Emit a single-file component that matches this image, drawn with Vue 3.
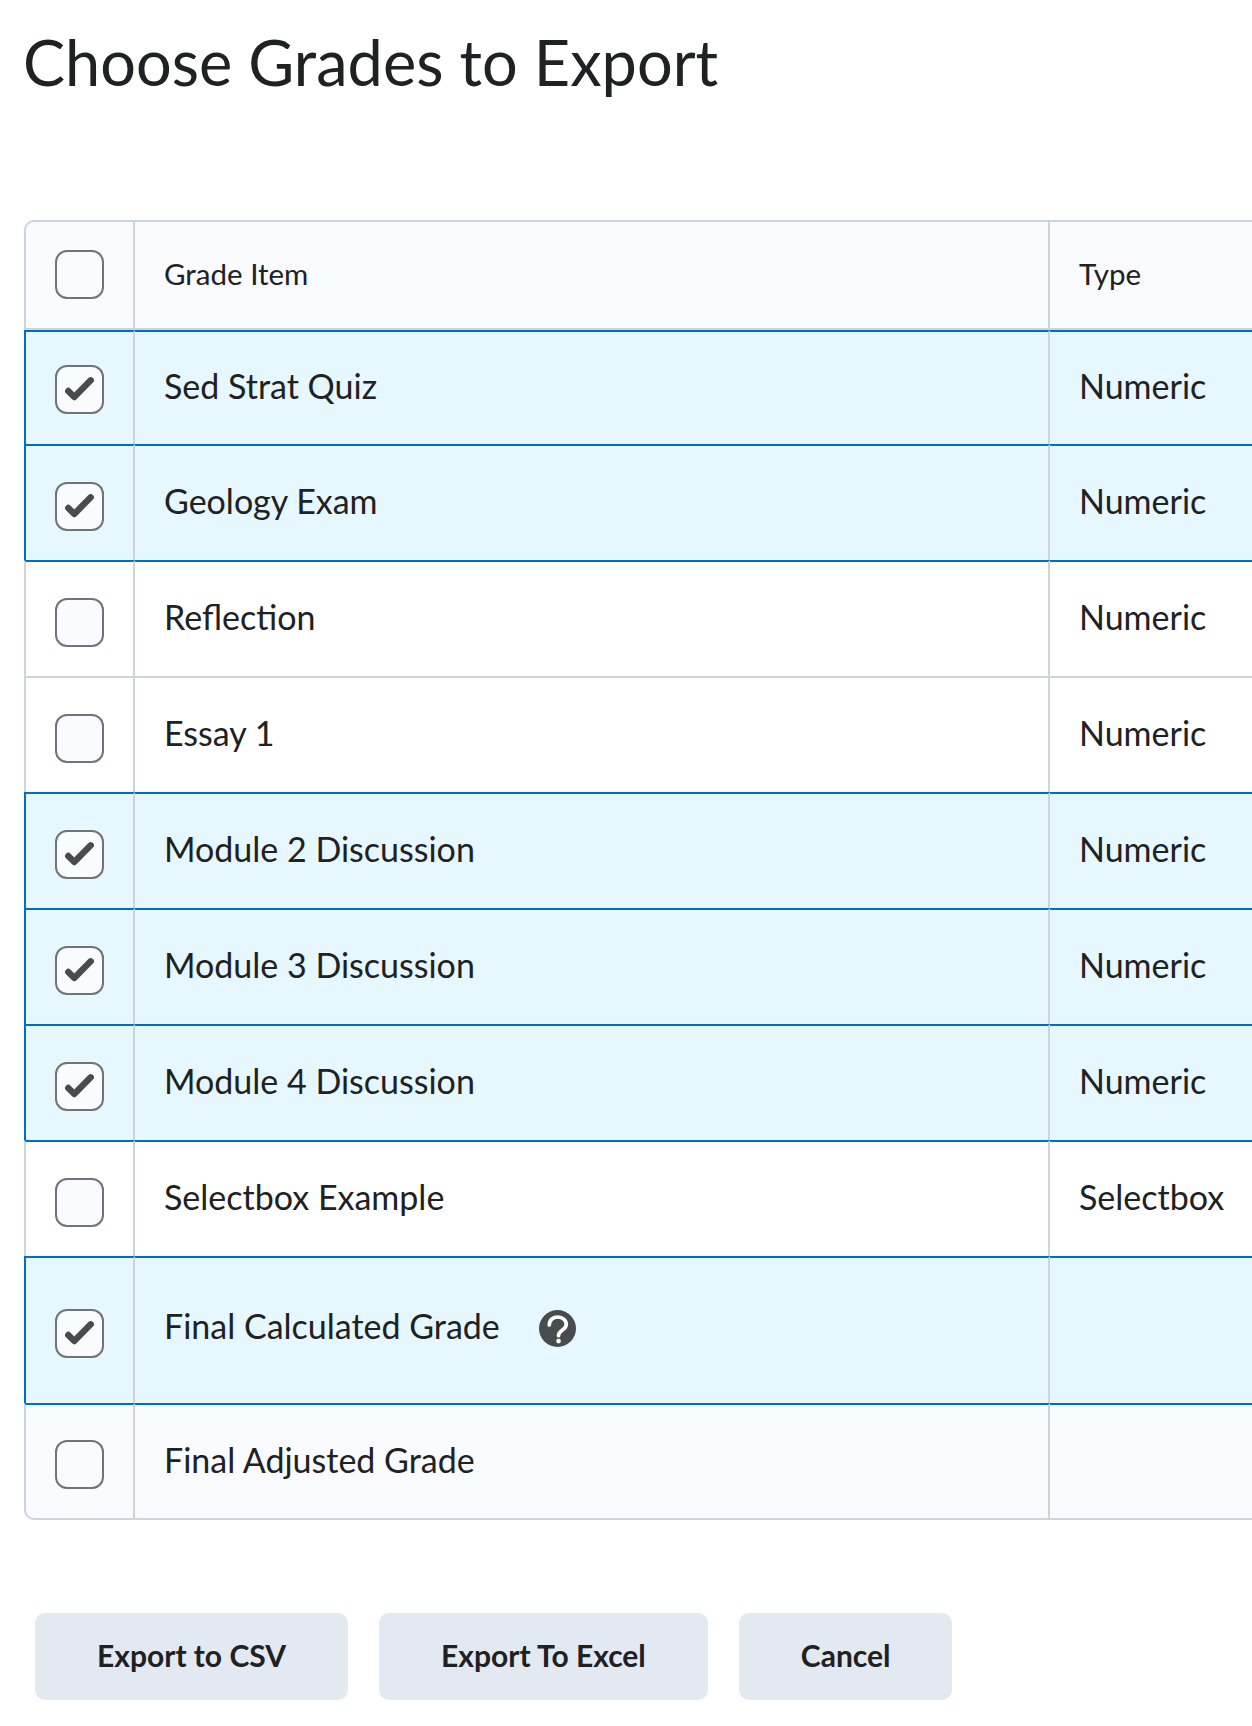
<template>
  <div class="page">
    <h1 class="title">Choose Grades to Export</h1>

    <table class="grades">
      <colgroup>
        <col class="col-check" />
        <col class="col-name" />
        <col class="col-type" />
      </colgroup>
      <thead>
        <tr>
          <th class="cell-check"><span class="checkbox"></span></th>
          <th>Grade Item</th>
          <th>Type</th>
        </tr>
      </thead>
      <tbody>
        <tr v-for="row in rows" :key="row.name" :class="rowClass(row)">
          <td class="cell-check">
            <span class="checkbox">
              <svg v-if="row.selected" viewBox="0 0 45 45" width="45" height="45">
                <path d="M11.3 24l6 6L33.7 13.3" fill="none" stroke="#494c4e" stroke-width="6.4" stroke-linecap="round" stroke-linejoin="round" />
              </svg>
            </span>
          </td>
          <td>
            <div class="name">
              <span>{{ row.name }}</span>
              <svg v-if="row.help" class="help" viewBox="0 0 36 36" width="37" height="37">
                <circle cx="18" cy="18" r="18" fill="#494c4e" />
                <path d="M10 14.5C10 9.5 14 6.8 18.3 6.8 22.8 6.8 26.5 9.8 26.5 14 26.5 19.5 19 19.5 19 25" fill="none" stroke="#fff" stroke-width="3.6" stroke-linecap="round" />
                <circle cx="19" cy="30.2" r="2.3" fill="#fff" />
              </svg>
            </div>
          </td>
          <td>{{ row.type }}</td>
        </tr>
      </tbody>
    </table>

    <div class="actions">
      <button class="btn">Export to CSV</button>
      <button class="btn">Export To Excel</button>
      <button class="btn">Cancel</button>
    </div>
  </div>
</template>

<script setup>
const rows = [
  { name: 'Sed Strat Quiz', type: 'Numeric', selected: true, first: true },
  { name: 'Geology Exam', type: 'Numeric', selected: true },
  { name: 'Reflection', type: 'Numeric', selected: false, white: true },
  { name: 'Essay 1', type: 'Numeric', selected: false, white: true },
  { name: 'Module 2 Discussion', type: 'Numeric', selected: true },
  { name: 'Module 3 Discussion', type: 'Numeric', selected: true },
  { name: 'Module 4 Discussion', type: 'Numeric', selected: true },
  { name: 'Selectbox Example', type: 'Selectbox', selected: false, white: true },
  { name: 'Final Calculated Grade', type: '', selected: true, help: true },
  { name: 'Final Adjusted Grade', type: '', selected: false, last: true }
]

function rowClass(row) {
  const i = rows.indexOf(row)
  return {
    selected: row.selected,
    white: row.white,
    'after-selected': i > 0 && rows[i - 1].selected,
    'row-first': row.first,
    'row-help': row.help,
    'row-last': row.last
  }
}
</script>

<style scoped>
.page {
  width: 1252px;
  height: 1726px;
  overflow: hidden;
  font-family: Lato, "Open Sans", sans-serif;
  color: #202122;
  background: #fff;
}

.title {
  margin: 0;
  padding: 24px 0 0 23px;
  height: 220px;
  box-sizing: border-box;
  font-size: 63px;
  line-height: 76px;
  font-weight: 400;
}

.grades {
  margin-left: 24px;
  width: 1500px;
  table-layout: fixed;
  border-collapse: separate;
  border-spacing: 0;
}

.col-check {
  width: 111px;
}

.col-name {
  width: 915px;
}

th,
td {
  box-sizing: border-box;
  padding: 0 0 0 29px;
  text-align: left;
  vertical-align: middle;
  border-top: 2px solid #cdd5dc;
  border-right: 2px solid #cdd5dc;
}

th {
  height: 110px;
  padding-bottom: 4px;
  border-bottom: 2px solid #cdd5dc;
  background: #f9fbff;
  font-size: 29.5px;
  font-weight: 400;
}

th:first-child,
td:first-child {
  border-left: 2px solid #cdd5dc;
}

th:first-child {
  border-top-left-radius: 10px;
}

td {
  height: 116px;
  padding-bottom: 6px;
  background: #f9fbff;
  font-size: 34px;
}

th.cell-check {
  padding: 0 0 2px 29px;
  line-height: 0;
}

td.cell-check {
  padding: 6px 0 0 29px;
  line-height: 0;
}

.checkbox {
  display: inline-block;
  box-sizing: border-box;
  width: 49px;
  height: 49px;
  border: 2px solid #6e7477;
  border-radius: 12px;
  background: #f9fbff;
}

.checkbox svg {
  display: block;
}

.white td {
  background: #fff;
}

.selected td {
  background: #e6f7ff;
  border-top-color: #006fbf;
}

.after-selected td {
  border-top-color: #006fbf;
}

.selected td:first-child {
  border-left-color: #006fbf;
}

.row-first td {
  height: 114px;
}

.row-first td.cell-check {
  padding-top: 3px;
}

.row-help td {
  height: 147px;
  padding-bottom: 10px;
}

.row-help td.cell-check {
  padding-bottom: 0;
}

.row-last td {
  height: 117px;
  border-bottom: 2px solid #cdd5dc;
}

.row-last td:first-child {
  border-bottom-left-radius: 10px;
}

.row-last .name {
  margin-top: 2px;
}

.name {
  display: flex;
  align-items: center;
  gap: 39px;
}

.help {
  flex: none;
  margin-top: 6px;
}

.actions {
  display: flex;
  gap: 31px;
  margin: 93px 0 0 35px;
}

.btn {
  height: 87px;
  padding: 0 62px 4px;
  border: none;
  border-radius: 10px;
  background: #e3e9f1;
  color: #202122;
  font-family: Lato, "Open Sans", sans-serif;
  font-size: 30px;
  font-weight: 700;
}
</style>

<style>
html,
body {
  margin: 0;
  overflow: hidden;
}
</style>
